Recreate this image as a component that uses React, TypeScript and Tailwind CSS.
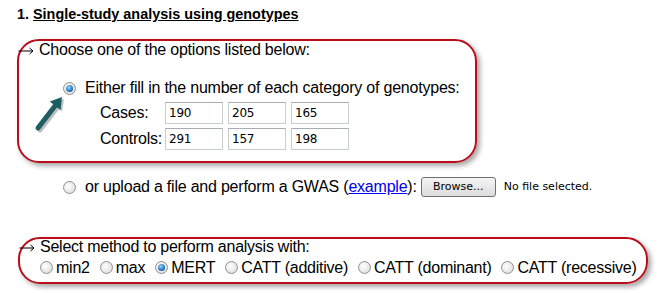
import React from 'react';

const Radio: React.FC<{ checked?: boolean }> = ({ checked = false }) => (
    <span className="relative inline-block w-[13px] h-[13px] shrink-0 rounded-full border border-[#8e8f8f] bg-[radial-gradient(circle_at_40%_40%,#ffffff,#d6d6d6)]">
        {checked && (
            <span className="absolute inset-[2px] rounded-full bg-[radial-gradient(circle_at_40%_35%,#9ad8ff,#2a7cc0_55%,#0d3f73)]" />
        )}
    </span>
);

const NumBox: React.FC<{ value: string }> = ({ value }) => (
    <input
        readOnly
        value={value}
        className="w-[58px] h-[22px] border border-[#c9cdd2] border-t-[#a9adb3] bg-white px-[3px] text-[12px] font-['DejaVu_Sans',Tahoma,sans-serif] text-black outline-none"
    />
);

// thin "→" drawn as svg, the font glyph is too small
const Arrow = () => (
    <svg className="-ml-[1px] mr-[5px] mt-[2px] shrink-0" width="16" height="8" viewBox="0 0 16 8">
        <line x1="0.5" y1="4" x2="15" y2="4" stroke="#000" strokeWidth="1" />
        <polyline points="11.5,1 15,4 11.5,7" fill="none" stroke="#000" strokeWidth="1" />
    </svg>
);

const methods = [
    { label: 'min2', checked: false },
    { label: 'max', checked: false },
    { label: 'MERT', checked: true },
    { label: 'CATT (additive)', checked: false },
    { label: 'CATT (dominant)', checked: false },
    { label: 'CATT (recessive)', checked: false },
];

export default function App() {
    return (
        <div className="w-[658px] h-[293px] overflow-hidden bg-white text-black font-['Liberation_Sans',Arial,sans-serif] pl-[17px] pt-[5px]">
            <p className="text-[14.4px] font-bold leading-[18px]">
                1. <span className="underline">Single-study analysis using genotypes</span>
            </p>

            {/* genotype counts */}
            <div className="relative w-[460px] mt-[16px] pb-[11px] border-2 border-[#b80d1a] rounded-[22px] shadow-[3px_3px_5px_rgba(0,0,0,0.35)] text-[16px] tracking-[-0.22px]">
                <div className="flex items-center leading-[18px]">
                    <Arrow />
                    Choose one of the options listed below:
                </div>
                <div className="flex items-center mt-[20px] ml-[44px] leading-[18px]">
                    <Radio checked />
                    <span className="ml-[9px]">Either fill in the number of each category of genotypes:</span>
                </div>
                <div className="grid grid-cols-[60px_58px_58px_58px] gap-x-[5px] gap-y-[4px] items-center ml-[81px] mt-[5px] leading-[18px]">
                    <span>Cases:</span>
                    <NumBox value="190" />
                    <NumBox value="205" />
                    <NumBox value="165" />
                    <span>Controls:</span>
                    <NumBox value="291" />
                    <NumBox value="157" />
                    <NumBox value="198" />
                </div>
                <svg className="absolute left-[15px] top-[53px]" width="34" height="40" viewBox="0 0 34 40">
                    <g transform="translate(2 2)" opacity="0.25">
                        <line x1="4" y1="34" x2="22.5" y2="10" stroke="#000" strokeWidth="5" strokeLinecap="round" />
                        <polygon points="28,3 26,15.4 16.4,8" fill="#000" />
                    </g>
                    <line x1="4" y1="34" x2="22.5" y2="10" stroke="#1d5e62" strokeWidth="5" strokeLinecap="round" />
                    <polygon points="28,3 26.5,16 15.8,7.6" fill="#1d5e62" />
                </svg>
            </div>

            {/* upload */}
            <div className="flex items-center h-[22px] mt-[13px] ml-[46px] text-[16px] tracking-[-0.22px]">
                <Radio />
                <span className="ml-[9px]">
                    or upload a file and perform a GWAS (<span className="text-[#0000ee] underline">example</span>):
                </span>
                <button className="ml-[4px] w-[75px] h-[20px] rounded-[3px] border border-[#707070] bg-[linear-gradient(#f4f4f4,#dcdcdc)] text-[11px] tracking-normal font-['DejaVu_Sans',Tahoma,sans-serif] text-black">
                    Browse...
                </button>
                <span className="ml-[8px] text-[11px] tracking-normal font-['DejaVu_Sans',Tahoma,sans-serif]">No file selected.</span>
            </div>

            {/* method */}
            <div className="w-[630px] ml-[1px] mt-[39px] pb-[5px] border-2 border-[#b80d1a] rounded-[22px] shadow-[3px_3px_5px_rgba(0,0,0,0.35)] text-[16px] tracking-[-0.25px]">
                <div className="flex items-center leading-[16px]">
                    <Arrow />
                    Select method to perform analysis with:
                </div>
                <div className="flex items-center mt-[3.5px] ml-[20px] leading-[18px]">
                    {methods.map((m, i) => (
                        <div key={m.label} className={`flex items-center ${i > 0 ? 'ml-[10px]' : ''}`}>
                            <Radio checked={m.checked} />
                            <span className="ml-[3px]">{m.label}</span>
                        </div>
                    ))}
                </div>
            </div>
        </div>
    );
}
